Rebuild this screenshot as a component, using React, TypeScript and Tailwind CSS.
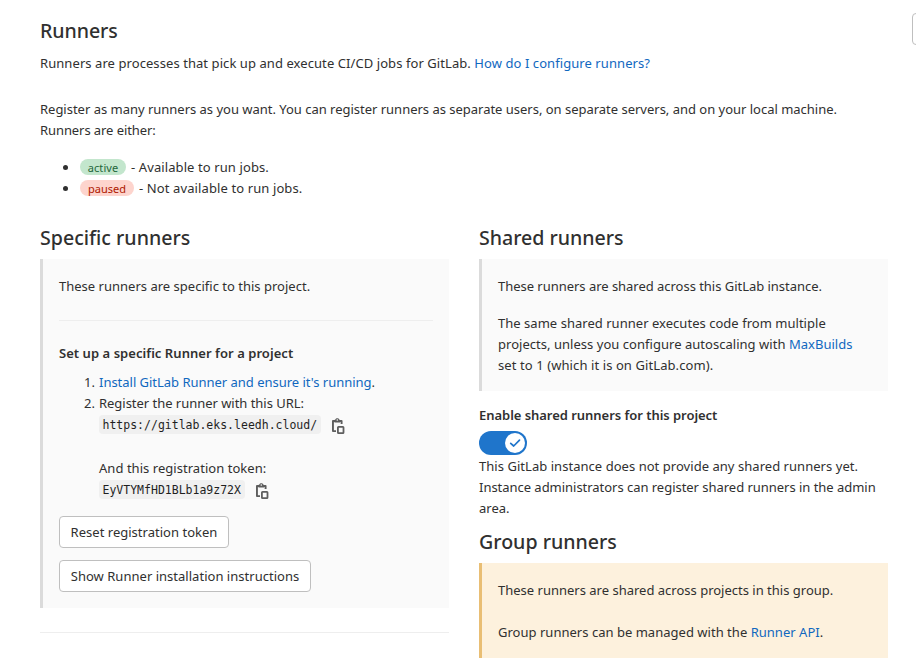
import React from "react";

function Link({ children }: { children: React.ReactNode }) {
  return <a href="#" className="text-[#1068bf]">{children}</a>;
}

function Heading({ children, className = "" }: { children: React.ReactNode; className?: string }) {
  return <h4 className={`pt-px text-[19.6px] leading-6 font-medium whitespace-nowrap ${className}`}>{children}</h4>;
}

function CopyIcon() {
  return (
    <svg width="16" height="16" viewBox="0 0 16 16" fill="none" className="shrink-0">
      <path d="M5 13.1H1.95V3H10.6V6" stroke="#5e5e5e" strokeWidth="1.9" strokeLinejoin="round" />
      <path d="M3.5 4.5V2.5C3.5 1.9 3.9 1.6 4.4 1.6C4.6 0.7 5.4 0.2 6.3 0.2C7.2 0.2 8 0.7 8.2 1.6C8.7 1.6 9.1 1.9 9.1 2.5V4.5Z" fill="#5e5e5e" />
      <circle cx="6.3" cy="2" r="0.8" fill="#fafafa" />
      <rect x="6.9" y="8.9" width="5.6" height="6.2" rx="0.6" stroke="#5e5e5e" strokeWidth="1.8" />
    </svg>
  );
}

function Code({ children, className }: { children: string; className: string }) {
  return (
    <code className={`flex h-[19px] items-center rounded bg-[#f0f0f0] pt-0.5 pl-[3.5px] font-['DejaVu_Sans_Mono',monospace] text-[11.5px] leading-[17px] text-[#1f1f1f] ${className}`}>
      {children}
    </code>
  );
}

export default function App() {
  return (
    <main className="h-[659px] w-[916px] overflow-hidden bg-white font-['Noto_Sans',sans-serif] text-[13px] leading-[21px] text-[#303030]">
      <header className="flex h-[99px]">
        <div className="w-[912px] shrink-0 pt-[18px] pl-10">
          <Heading className="tracking-[-0.08px]">Runners</Heading>
          <p className="mt-[10px] whitespace-nowrap tracking-[0.072px]">
            Runners are processes that pick up and execute CI/CD jobs for GitLab. <Link>How do I configure runners?</Link>
          </p>
        </div>
        <button className="mt-[13px] h-8 w-20 shrink-0 rounded border border-[#bfbfbf] bg-white" aria-label="Collapse" />
      </header>

      <section className="pl-10 whitespace-nowrap">
        <p className="tracking-[-0.015px]">
          Register as many runners as you want. You can register runners as separate users, on separate servers, and on your local machine.
        </p>
        <p className="tracking-[-0.08px]">Runners are either:</p>
        <ul className="mt-4 pl-[23px]">
          <li className="flex h-[21px] items-center">
            <span className="mr-3 mb-px size-[5px] rounded-full bg-[#303030]" />
            <span className="mr-[5px] mb-px flex h-4 w-[46px] items-center justify-center rounded-full bg-[#c3e6cd] pt-px text-[11px] leading-[15px] tracking-[0.1px] text-[#24663b]">active</span>
            <span className="tracking-[0.1px]">- Available to run jobs.</span>
          </li>
          <li className="flex h-[21px] items-center">
            <span className="mr-3 mb-px size-[5px] rounded-full bg-[#303030]" />
            <span className="mr-[5px] mb-px flex h-4 w-[54px] items-center justify-center rounded-full bg-[#fdd4cd] pt-px text-[11px] leading-[15px] text-[#ae1800]">paused</span>
            <span className="tracking-[0.11px]">- Not available to run jobs.</span>
          </li>
        </ul>
      </section>

      <div className="mt-[26px] flex gap-[30px] pl-10 whitespace-nowrap">
        <section className="w-[409px]">
          <Heading>Specific runners</Heading>
          <div className="mt-[9px] h-[349px] border-l-[3px] border-[#dbdbdb] bg-[#fafafa] px-4 pt-[17px]">
            <p className="tracking-[0.01px]">These runners are specific to this project.</p>
            <hr className="mt-[23px] border-[#eeeeee]" />
            <h5 className="mt-[22px] font-semibold tracking-[0.05px]">Set up a specific Runner for a project</h5>
            <ol className="mt-2">
              <li className="flex">
                <span className="w-10 pr-1 text-right">1.</span>
                <span className="tracking-[-0.02px]"><Link>Install GitLab Runner and ensure it's running</Link>.</span>
              </li>
              <li className="flex">
                <span className="w-10 pr-1 text-right">2.</span>
                <div>
                  <p className="tracking-[-0.03px]">Register the runner with this URL:</p>
                  <div className="mt-px flex h-[19px] items-start gap-[10px]">
                    <Code className="w-[222px]">https://gitlab.eks.leedh.cloud/</Code>
                    <div className="pt-[3px]"><CopyIcon /></div>
                  </div>
                  <p className="mt-6 tracking-[0.04px]">And this registration token:</p>
                  <div className="mt-px flex h-[19px] items-start gap-[10px]">
                    <Code className="w-[146px]">EyVTYMfHD1BLb1a9z72X</Code>
                    <div className="pt-[3px]"><CopyIcon /></div>
                  </div>
                </div>
              </li>
            </ol>
            <div className="mt-[17px] flex flex-col items-start gap-3">
              <button className="h-8 w-[170px] rounded border border-[#bfbfbf] bg-white tracking-[0.02px]">Reset registration token</button>
              <button className="h-8 w-[252px] rounded border border-[#bfbfbf] bg-white tracking-[0.02px]">Show Runner installation instructions</button>
            </div>
          </div>
          <hr className="mt-6 border-[#eeeeee]" />
        </section>

        <section className="w-[409px]">
          <Heading className="tracking-[-0.03px]">Shared runners</Heading>
          <div className="mt-[9px] h-[132px] border-l-[3px] border-[#dbdbdb] bg-[#fafafa] px-4 pt-[17px]">
            <p className="tracking-[-0.03px]">These runners are shared across this GitLab instance.</p>
            <p className="mt-4 tracking-[0.03px]">
              The same shared runner executes code from multiple<br />
              projects, unless you configure autoscaling with <Link>MaxBuilds</Link><br />
              <span className="tracking-[0.09px]">set to 1 (which it is on GitLab.com).</span>
            </p>
          </div>
          <p className="mt-[14px] font-semibold tracking-[-0.04px]">Enable shared runners for this project</p>
          <button className="mt-[5px] flex h-6 w-12 items-center justify-end rounded-full bg-[#1f75cb] pr-0.5" aria-label="Enable shared runners for this project">
            <span className="flex size-5 items-center justify-center rounded-full bg-white">
              <svg width="12" height="12" viewBox="0 0 12 12" fill="none">
                <path d="M1.7 6.3L4.7 9L10.5 3.2" stroke="#1f75cb" strokeWidth="1.7" strokeLinecap="round" strokeLinejoin="round" />
              </svg>
            </span>
          </button>
          <p className="mt-px tracking-[0.04px]">This GitLab instance does not provide any shared runners yet.</p>
          <p className="tracking-[-0.03px]">Instance administrators can register shared runners in the admin</p>
          <p>area.</p>
          <Heading className="mt-[10px]">Group runners</Heading>
          <div className="mt-[9px] h-[95px] border-l-[3px] border-[#e9be74] bg-[#fdf1dd] px-4 pt-[17px]">
            <p>These runners are shared across projects in this group.</p>
            <p className="mt-[21px] tracking-[0.02px]">Group runners can be managed with the <Link>Runner API</Link>.</p>
          </div>
        </section>
      </div>
    </main>
  );
}
